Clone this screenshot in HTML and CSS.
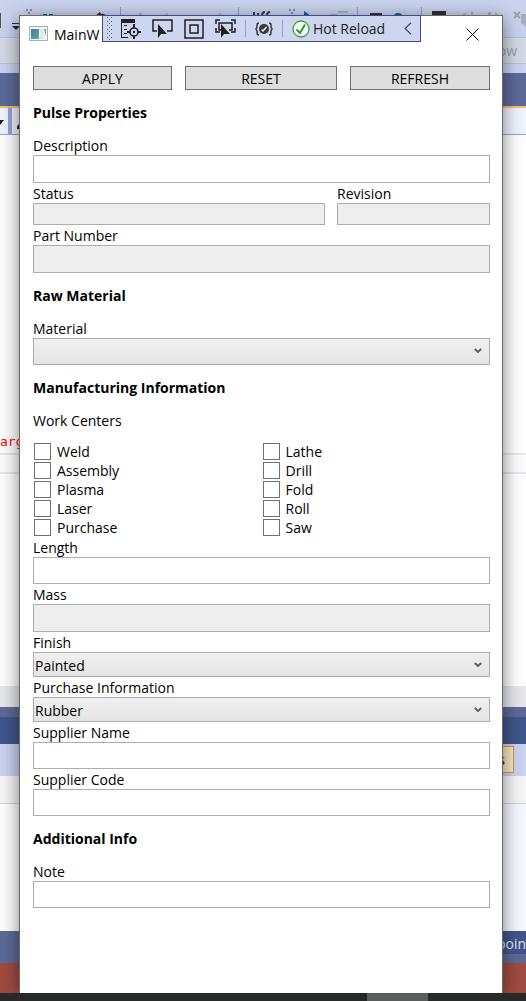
FILE: index.html
```html
<!DOCTYPE html>
<html lang="en">
<head>
<meta charset="utf-8">
<meta name="viewport" content="width=device-width, initial-scale=1">
<title>MainWindow</title>
<link rel="stylesheet" href="styles.css">
</head>
<body>
<div class="desktop">
  <div class="ide" aria-hidden="true">
    <div class="ide-tools">
      <svg width="526" height="37" viewBox="0 0 526 37">
        <path d="M0 13h1v15H0z" fill="#555"/>
        <path d="M12 23h8v1h-8zM12 26h8l-4 4z" fill="#1e2a4a"/>
        <path d="M26 9h2v2h-2zM30 9h2v2h-2zM28 12h2v2h-2zM289 9h2v2h-2zM293 9h2v2h-2zM291 12h2v2h-2z" fill="#7d8bb5"/>
        <path d="M43 14h4v2h-4zM49 14h4v2h-4zM304 11l7 5h-7zM394 16q0-3 4-3t4 3z" fill="#0a62a9"/>
        <path d="M70 15h10v1H70z" fill="#a1362c"/>
        <path d="M95 16l5-4 1 2q3-1 5 2zM370 13h12v3h-12zM432 11h14v5h-14z" fill="#303036"/>
        <path d="M120.500 7v9M238.500 7v9M357.500 7v9M421.500 7v9" stroke="#8fa3d3"/>
        <path d="M138 16l2-4 3 4zM165 16l2-4 1 4zM189 15h9v1h-9zM218 16l2-3 3 3zM330 14h7v2h-7zM338 11h10v2h-10zM461 16l5-4v4zM471 12h2v4h-2zM488 12h3v4h-3zM495 12l5 4h-5zM521 14h5v13l-5-4z" fill="#a9aebf"/>
        <path d="M514 12l6 6M520 12l-6 6" stroke="#9da2b5" stroke-width="2"/>
        <path d="M254 12v4M258 13v3M262 16q0-4 3-4M267 16q0-4 3-4" stroke="#3c3c45" stroke-width="2" fill="none"/>
      </svg>
    </div>
    <div class="ide-search">ow</div>
    <div class="ide-gap"></div>
    <div class="ide-tabs"></div>
    <div class="ide-nav">
      <svg width="20" height="26" viewBox="0 0 20 26"><path d="M8 0h4v26H8z" fill="#93a6d2"/><path d="M-4 12h8l-4 5z" fill="#1e1e1e"/><path d="M17 21q0-5 3-5v5z" fill="#1e1e1e"/></svg>
    </div>
    <div class="ide-code"><span>arg</span></div>
    <div class="ide-split"></div>
    <div class="ide-pane"></div>
    <div class="ide-scroll"></div>
    <div class="ide-frame"></div>
    <div class="ide-title"></div>
    <div class="ide-filter"><span>s</span></div>
    <div class="ide-head"></div>
    <div class="ide-list"></div>
    <div class="ide-bottom"><span>poin</span></div>
    <div class="ide-status"></div>
  </div>

  <main class="window">
    <header class="titlebar">
      <svg class="app-icon" width="19" height="15" viewBox="0 0 19 15">
        <defs><linearGradient id="pic" x2="1" y2="1"><stop stop-color="#3f72b5"/><stop offset="1" stop-color="#5cb489"/></linearGradient></defs>
        <path d="M.5.500h18v14H.500z" fill="#f3f5f6" stroke="#a7adb1"/><path d="M2 3h8v10H2z" fill="url(#pic)"/><path d="M11 3h4v10h-4z" fill="#e2e7e8"/><path d="M15 3h2v7z" fill="#5cb489"/>
      </svg>
      <span class="caption">MainW</span>
      <button class="close" type="button" aria-label="Close"><svg width="13" height="13" viewBox="0 0 13 13"><path d="M.5.500l12 12M12.500.500l-12 12" stroke="#000" fill="none"/></svg></button>
    </header>

    <form class="form">
      <div class="actions">
        <button type="button">APPLY</button>
        <button type="button">RESET</button>
        <button type="button">REFRESH</button>
      </div>

      <h2>Pulse Properties</h2>
      <label for="description">Description</label>
      <input class="box tall" id="description" type="text">
      <div class="pair">
        <div class="field"><label for="status">Status</label><input class="box short" id="status" type="text" disabled></div>
        <div class="field"><label for="revision">Revision</label><input class="box short" id="revision" type="text" disabled></div>
      </div>
      <label for="part">Part Number</label>
      <input class="box tall" id="part" type="text" disabled>

      <h2>Raw Material</h2>
      <label for="material">Material</label>
      <div class="drop"><select class="box" id="material"><option></option></select><svg width="8" height="6" viewBox="0 0 8 6"><path d="M.8 1l3.200 3 3.200-3" /></svg></div>

      <h2>Manufacturing Information</h2>
      <fieldset class="centers">
        <legend>Work Centers</legend>
        <div class="checks">
          <label><input type="checkbox">Weld</label>
          <label><input type="checkbox">Assembly</label>
          <label><input type="checkbox">Plasma</label>
          <label><input type="checkbox">Laser</label>
          <label><input type="checkbox">Purchase</label>
          <label><input type="checkbox">Lathe</label>
          <label><input type="checkbox">Drill</label>
          <label><input type="checkbox">Fold</label>
          <label><input type="checkbox">Roll</label>
          <label><input type="checkbox">Saw</label>
        </div>
      </fieldset>
      <label for="length">Length</label>
      <input class="box" id="length" type="text">
      <label for="mass">Mass</label>
      <input class="box tall" id="mass" type="text" disabled>
      <label for="finish">Finish</label>
      <div class="drop"><select class="box slim" id="finish"><option>Painted</option></select><svg width="8" height="6" viewBox="0 0 8 6"><path d="M.8 1l3.200 3 3.200-3" /></svg></div>
      <label for="purchase">Purchase Information</label>
      <div class="drop"><select class="box slim" id="purchase"><option>Rubber</option></select><svg width="8" height="6" viewBox="0 0 8 6"><path d="M.8 1l3.200 3 3.200-3" /></svg></div>
      <label for="supplier">Supplier Name</label>
      <input class="box" id="supplier" type="text">
      <label for="code">Supplier Code</label>
      <input class="box" id="code" type="text">

      <h2>Additional Info</h2>
      <label for="note">Note</label>
      <input class="box" id="note" type="text">
    </form>
  </main>

  <div class="debugbar">
    <svg class="grip" width="6" height="23" viewBox="0 0 6 23"><defs><pattern id="dots" width="4" height="4" patternUnits="userSpaceOnUse"><path d="M0 0h1v1H0zM2 2h1v1H2z" fill="#4f5c88"/></pattern></defs><path d="M0 0h6v23H0z" fill="url(#dots)"/></svg>
    <button type="button" aria-label="Live visual tree"><svg width="21" height="20" viewBox="0 0 21 20"><path d="M1 0h14v4H1zM1 4h1v15H1zM4 6h3v1H4zM4 10h3v1H4zM4 14h3v1H4zM2 18h6v1H2z" fill="#1f1f1f"/><path d="M14 5v4M14 17v3M7 13h3M18 13h3" stroke="#1f1f1f" stroke-width="2"/><circle cx="14" cy="13" r="4" fill="none" stroke="#1f1f1f" stroke-width="1.600"/><path d="M13 12h2v2h-2z" fill="#1f1f1f"/></svg></button>
    <button type="button" aria-label="Select element"><svg width="21" height="20" viewBox="0 0 21 20"><path d="M5 12H1V1h19v11h-5" fill="none" stroke="#1f1f1f" stroke-width="1.500"/><path d="M6 5v14l3-4h6z" fill="#1f1f1f"/></svg></button>
    <button type="button" aria-label="Layout adorners"><svg width="20" height="20" viewBox="0 0 20 20"><path d="M1 1h18v18H1zM6 6h8v8H6z" fill="none" stroke="#1f1f1f" stroke-width="1.500"/></svg></button>
    <button type="button" aria-label="Track focused element"><svg width="21" height="20" viewBox="0 0 21 20"><path d="M1 5V1h4M16 1h4v4M1 9v4h4M20 9v4h-4M6 11H4V4h13v7h-3" fill="none" stroke="#1f1f1f" stroke-width="1.500"/><path d="M6 5v14l3-4h6z" fill="#1f1f1f"/></svg></button>
    <i></i>
    <button type="button" aria-label="Binding failures"><svg width="18" height="14" viewBox="0 0 18 14"><path d="M4 1Q2 1 2 3v2L1 7l1 2v2q0 2 2 2M14 1q2 0 2 2v2l1 2-1 2v2q0 2-2 2" fill="none" stroke="#3a3a3a" stroke-width="1.500"/><circle cx="9" cy="7" r="5" fill="#383838"/><path d="M6.500 7.500l1.500 1.500 3.500-4" fill="none" stroke="#fff" stroke-width="1.300"/></svg></button>
    <i></i>
    <button class="hot" type="button"><svg width="18" height="18" viewBox="0 0 18 18"><circle cx="9" cy="9" r="8" fill="#f7faf7" stroke="#39a03b" stroke-width="1.300"/><path d="M4.500 9.500L8 13l5-8.500" fill="none" stroke="#29962c" stroke-width="1.900"/></svg>Hot Reload</button>
    <button class="collapse" type="button" aria-label="Collapse"><svg width="8" height="13" viewBox="0 0 8 13"><path d="M7 .8L1.200 6.500 7 12.200" fill="none" stroke="#454a85" stroke-width="1.300"/></svg></button>
  </div>

  <footer class="taskbar"><span></span></footer>
</div>
</body>
</html>
```
FILE: styles.css
```css
* { box-sizing: border-box; }
body {
  margin: 0;
  font: 14px/20px "Open Sans", "Noto Sans", sans-serif;
  color: #000;
}
button, input, select { font: inherit; color: inherit; margin: 0; border-radius: 0; }
button { padding: 0; border: 0; background: none; }
svg { display: block; flex: none; }

.desktop {
  position: relative;
  display: flex;
  flex-direction: column;
  min-height: 100vh;
  overflow: hidden;
}

/* IDE behind the window */
.ide {
  position: absolute;
  inset: 0 0 8px;
  display: flex;
  flex-direction: column;
  background: #fff;
}
.ide > div { flex: none; overflow: hidden; }
.ide-tools { height: 37px; background: #cad3ee; }
.ide-search {
  height: 27px;
  padding: 3px 9px;
  background: #d4dae5;
  border: solid #b9c1d3;
  border-width: 1px 0;
  color: #999da6;
  text-align: right;
}
.ide-gap { height: 9px; background: #cad3f0; }
.ide-tabs { height: 35px; background: #5d6a99; border-bottom: 2px solid #f2c172; }
.ide-nav { height: 27px; background: #f0f4ff; border-bottom: 1px solid #8fa5d5; }
.ide-code {
  height: 318px;
  display: flex;
  align-items: flex-end;
  font: 13px/22px "DejaVu Sans Mono", monospace;
  color: #f00;
}
.ide-split { height: 21px; border: solid #e6e6f0; border-width: 2px 0; background: #fdfdfd; }
.ide .ide-pane { flex: 1 0 0; background: #fff; }
.ide-scroll { height: 21px; background: #e6e7ec; }
.ide-frame { height: 10px; background: #5d6a99; }
.ide-title { height: 27px; background: #40568d; }
.ide-filter {
  height: 32px;
  padding: 2px 12px 3px;
  display: flex;
  justify-content: flex-end;
  background: #cad3f0;
}
.ide-filter span {
  width: 32px;
  padding: 3px 8px;
  border: 1px solid #cf9f4c;
  background: #fbe8bd;
  text-align: right;
}
.ide-head { height: 28px; background: #f6f6f6; border-bottom: 1px solid #d5d7e2; }
.ide-list { height: 127px; background: linear-gradient(90deg, #fff 50%, #f6f8ff 50%); }
.ide-bottom {
  height: 32px;
  padding-top: 3px;
  background: linear-gradient(90deg, #5d6a99 50%, transparent 50%), linear-gradient(#40568d 23px, #5d6a99 23px);
  color: #dfe5f5;
  text-align: right;
}
.ide-status { height: 30px; background: #a24b41; }

/* Application window */
.window {
  position: relative;
  flex: 1;
  margin: 15px 23px 0 19px;
  border: 1px solid #6a6a6c;
  border-bottom: 0;
  background: #fff;
  box-shadow: 0 4px 18px rgba(0, 0, 0, .5);
}
.titlebar {
  height: 50px;
  padding: 5px 23px 0 9px;
  display: flex;
  align-items: flex-start;
  gap: 6px;
}
.app-icon { margin-top: 5px; }
.caption { line-height: 28px; }
.close { margin: 7px 0 0 auto; }

.form { padding: 0 12px 20px 13px; }
.actions { display: grid; grid-template-columns: 139fr 152fr 140fr; gap: 13px; }
.actions button {
  height: 24px;
  line-height: 24px;
  border: 1px solid #707070;
  background: #ddd;
}
h2 { margin: 0; height: 45px; font-size: 14px; line-height: 46px; font-weight: 700; }
label { display: block; height: 20px; line-height: 22px; }
.box {
  display: block;
  width: 100%;
  height: 27px;
  padding: 0 2px;
  border: 1px solid #abadb3;
  background: #fff;
  outline: 0;
}
.box.tall { height: 28px; }
.box.short { height: 22px; }
.box.slim { height: 25px; }
.box:disabled { background: #eee; }
.pair { display: grid; grid-template-columns: 292fr 153fr; gap: 12px; }
.field { min-width: 0; }
.drop { position: relative; }
.drop select {
  appearance: none;
  padding: 2px 1px 0;
  border-color: #acacac;
  background: linear-gradient(#f0f0f0, #e5e5e5);
}
.drop svg { position: absolute; right: 8px; top: 10px; pointer-events: none; }
.drop path { fill: none; stroke: #606060; stroke-width: 2; }

.centers { margin: 0; padding: 0; border: 0; min-width: 0; }
.centers legend { padding: 0; height: 20px; line-height: 22px; }
.checks {
  display: grid;
  grid-template: repeat(5, 19px) / 1fr 1fr;
  grid-auto-flow: column;
  padding-top: 12px;
}
.checks label { display: flex; align-items: center; gap: 6px; height: 19px; line-height: 20px; padding-left: 1px; }
.checks input {
  appearance: none;
  width: 17px;
  height: 17px;
  border: 1px solid #707070;
  background: #fff;
}
.checks input:checked { background: #707070; }

/* Debug toolbar over the title bar */
.debugbar {
  position: absolute;
  top: 15px;
  left: 102px;
  height: 27px;
  padding: 0 8px 0 4px;
  display: flex;
  align-items: center;
  gap: 11px;
  border: 1px solid #3f4c82;
  background: #cdd5ef;
  color: #1e1e1e;
}
.grip { margin-right: -4px; }
.debugbar i { width: 1px; height: 17px; margin: 0 -2px; background: #8fa3d3; }
.debugbar .hot { display: flex; align-items: center; gap: 3px; }
.debugbar .collapse { margin-left: 8px; }

.taskbar { position: relative; height: 8px; padding: 0 18.600%; background: #272a29; }
.taskbar span { display: block; width: 61px; height: 8px; margin-left: auto; background: #5b5e5d; }
```
